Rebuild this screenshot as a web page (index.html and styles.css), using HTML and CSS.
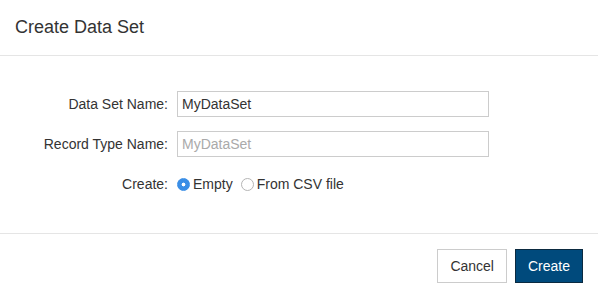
FILE: index.html
```html
<!DOCTYPE html>
<html lang="en">
<head>
  <meta charset="UTF-8">
  <title>Create Data Set</title>
  <link rel="stylesheet" href="styles.css">
</head>
<body>
  <div class="dialog">
    <div class="dialog-header">
      <h2>Create Data Set</h2>
    </div>

    <div class="dialog-body">
      <div class="form-row">
        <label class="form-label" for="ds-name">Data Set Name:</label>
        <input class="form-input" id="ds-name" type="text" value="MyDataSet">
      </div>
      <div class="form-row">
        <label class="form-label" for="rt-name">Record Type Name:</label>
        <input class="form-input" id="rt-name" type="text" placeholder="MyDataSet">
      </div>
      <div class="form-row">
        <span class="form-label">Create:</span>
        <div class="radio-group">
          <label class="radio"><span class="radio-dot checked"></span>Empty</label>
          <label class="radio"><span class="radio-dot"></span>From CSV file</label>
        </div>
      </div>
    </div>

    <div class="dialog-footer">
      <button class="btn">Cancel</button>
      <button class="btn btn-primary">Create</button>
    </div>
  </div>
</body>
</html>
```

FILE: styles.css
```css
body {
  margin: 0;
  font-family: "Liberation Sans", Arial, sans-serif;
  color: #333;
  background: #fff;
}
.dialog {
  width: 598px;
  height: 298px;
  display: flex;
  flex-direction: column;
}
.dialog-header {
  height: 55px;
  border-bottom: 1px solid #e5e5e5;
  padding: 0 15px;
  display: flex;
  align-items: center;
}
.dialog-header h2 {
  margin: 0;
  font-size: 18px;
  font-weight: normal;
  color: #333;
}
.dialog-body {
  height: 178px;
  padding-top: 35px;
  box-sizing: border-box;
  border-bottom: 1px solid #e5e5e5;
}
.form-row {
  display: flex;
  align-items: center;
  height: 26px;
  margin-bottom: 14px;
}
.form-label {
  width: 168px;
  text-align: right;
  font-size: 14px;
  margin-right: 9px;
}
.form-input {
  width: 312px;
  height: 26px;
  box-sizing: border-box;
  border: 1px solid #ccc;
  padding: 0 4px;
  font-family: inherit;
  font-size: 14px;
  color: #333;
  outline: none;
}
.form-input::placeholder {
  color: #aaa;
}
.radio-group {
  display: flex;
  gap: 8px;
}
.radio {
  display: flex;
  align-items: center;
  font-size: 14px;
}
.radio-dot {
  width: 13px;
  height: 13px;
  box-sizing: border-box;
  border: 1px solid #b5b5b5;
  border-radius: 50%;
  margin-right: 3px;
  background: #fff;
}
.radio-dot.checked {
  border-color: #3a8ee6;
  background: radial-gradient(circle, #fff 0 1.6px, #3a8ee6 2.2px);
}
.dialog-footer {
  display: flex;
  justify-content: flex-end;
  gap: 8px;
  padding: 15px 15px 0;
}
.btn {
  height: 34px;
  padding: 0 12px;
  border: 1px solid #ccc;
  background: #fff;
  font-family: inherit;
  font-size: 14px;
  color: #333;
  cursor: pointer;
}
.btn-primary {
  background: #004a7c;
  border-color: #0b2a40;
  color: #fff;
}
```
